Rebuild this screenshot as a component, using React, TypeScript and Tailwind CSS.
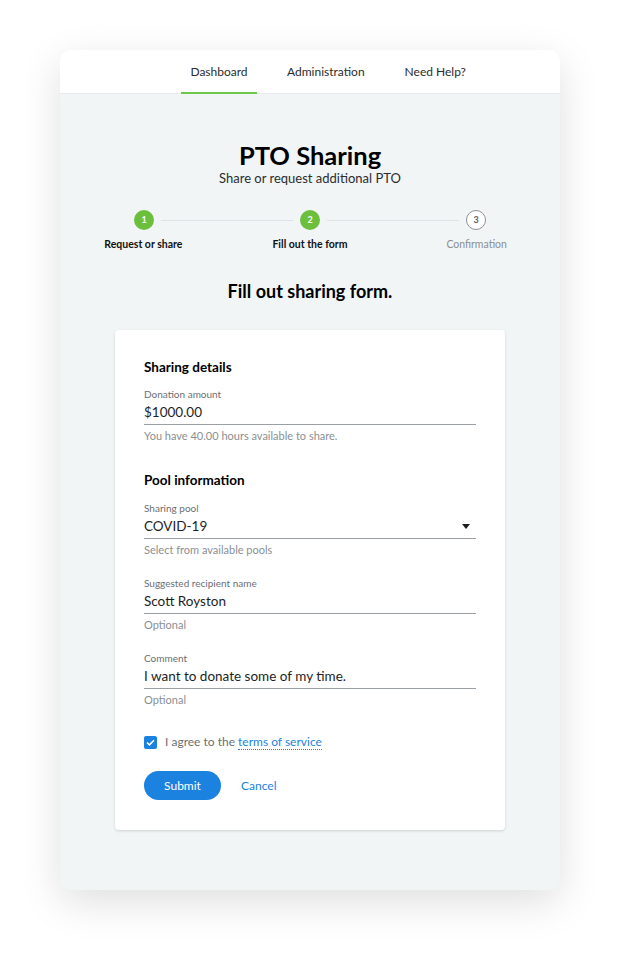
import React from 'react';

const font = { fontFamily: 'Lato, "Open Sans", sans-serif' };

function Field({ label, value, helper, select }: { label: string; value: string; helper: string; select?: boolean }) {
  return (
    <div>
      <div className="text-[10px] leading-[12px] text-[#6b6f72]">{label}</div>
      <div className="mt-[3px] flex items-center justify-between border-b border-[#9a9fa3] pb-[3px]">
        <span className="text-[13.5px] leading-[18px] text-[#1c1e1f]">{value}</span>
        {select && (
          <svg width="8" height="5" viewBox="0 0 8 5" className="mr-[6px]">
            <path d="M0 0h8L4 5z" fill="#1c1e1f" />
          </svg>
        )}
      </div>
      <div className="mt-[5px] text-[11px] leading-[12px] text-[#8a8f93]">{helper}</div>
    </div>
  );
}

function Step({ n, done }: { n: number; done: boolean }) {
  return done ? (
    <div className="w-[20px] h-[20px] rounded-full bg-[#6cbf3c] text-white text-[9px] font-bold flex items-center justify-center shrink-0">
      {n}
    </div>
  ) : (
    <div className="w-[20px] h-[20px] rounded-full border border-[#8d9195] bg-white text-[#5d6165] text-[9px] font-bold flex items-center justify-center shrink-0">
      {n}
    </div>
  );
}

export default function App() {
  return (
    <div className="min-h-[960px] bg-white pt-[50px]" style={font}>
      <div className="mx-auto w-[500px] h-[840px] rounded-[10px] bg-[#f1f5f6] overflow-hidden shadow-[0_12px_40px_rgba(0,0,0,0.13)]">
        <header className="h-[44px] bg-white border-b border-[#e6eaec] flex items-stretch">
          <nav className="ml-[121px] flex items-stretch text-[12px] text-[#2a2c2e]">
            <div className="relative w-[76px] flex items-center justify-center">
              Dashboard
              <span className="absolute left-0 right-0 bottom-[-1px] h-[2px] bg-[#6cc94a]" />
            </div>
            <div className="ml-[30px] flex items-center">Administration</div>
            <div className="ml-[40px] flex items-center">Need Help?</div>
          </nav>
        </header>

        <div className="text-center">
          <h1 className="mt-[47px] text-[25.5px] leading-[28px] font-bold text-black">PTO Sharing</h1>
          <p className="mt-[1px] text-[13px] leading-[16px] text-[#2a2c2e]">Share or request additional PTO</p>
        </div>

        <div className="mt-[24px] flex items-center px-[74px]">
          <Step n={1} done />
          <div className="flex-1 h-px bg-[#dde2e5] mx-[7px]" />
          <Step n={2} done />
          <div className="flex-1 h-px bg-[#dde2e5] mx-[7px]" />
          <Step n={3} done={false} />
        </div>
        <div className="mt-[8px] grid grid-cols-3 text-center text-[10.5px] leading-[12px]">
          <div className="font-bold text-[#111]">Request or share</div>
          <div className="font-bold text-[#111]">Fill out the form</div>
          <div className="text-[#8a8f93]">Confirmation</div>
        </div>

        <h2 className="mt-[31px] text-center text-[18px] leading-[20px] font-bold text-black">Fill out sharing form.</h2>

        <div className="mt-[29px] mx-[55px] h-[500px] bg-white rounded-[4px] shadow-[0_1px_3px_rgba(0,0,0,0.14)] px-[29px] pt-[29px]">
          <h3 className="text-[13.5px] leading-[16px] font-bold text-black">Sharing details</h3>
          <div className="mt-[13px]">
            <Field label="Donation amount" value="$1000.00" helper="You have 40.00 hours available to share." />
          </div>

          <h3 className="mt-[30px] text-[13.5px] leading-[16px] font-bold text-black">Pool information</h3>
          <div className="mt-[14px]">
            <Field label="Sharing pool" value="COVID-19" helper="Select from available pools" select />
          </div>
          <div className="mt-[21px]">
            <Field label="Suggested recipient name" value="Scott Royston" helper="Optional" />
          </div>
          <div className="mt-[21px]">
            <Field label="Comment" value="I want to donate some of my time." helper="Optional" />
          </div>

          <div className="mt-[28px] flex items-center gap-[8px] h-[16px]">
            <div className="w-[13px] h-[13px] rounded-[2px] bg-[#1b82e0] flex items-center justify-center">
              <svg width="9" height="7" viewBox="0 0 9 7">
                <path d="M1 3.5L3.4 5.8L8 1.2" fill="none" stroke="white" strokeWidth="1.6" />
              </svg>
            </div>
            <span className="text-[12px] leading-[16px] text-[#6b6f72]">
              I agree to the{' '}
              <span className="text-[#1b82e0] border-b border-dotted border-[#1b82e0]">terms of service</span>
            </span>
          </div>

          <div className="mt-[21px] flex items-center">
            <button className="w-[77px] h-[29px] rounded-full bg-[#1b82e0] text-white text-[12px]">Submit</button>
            <button className="ml-[20px] text-[12px] text-[#1b82e0]">Cancel</button>
          </div>
        </div>
      </div>
    </div>
  );
}
